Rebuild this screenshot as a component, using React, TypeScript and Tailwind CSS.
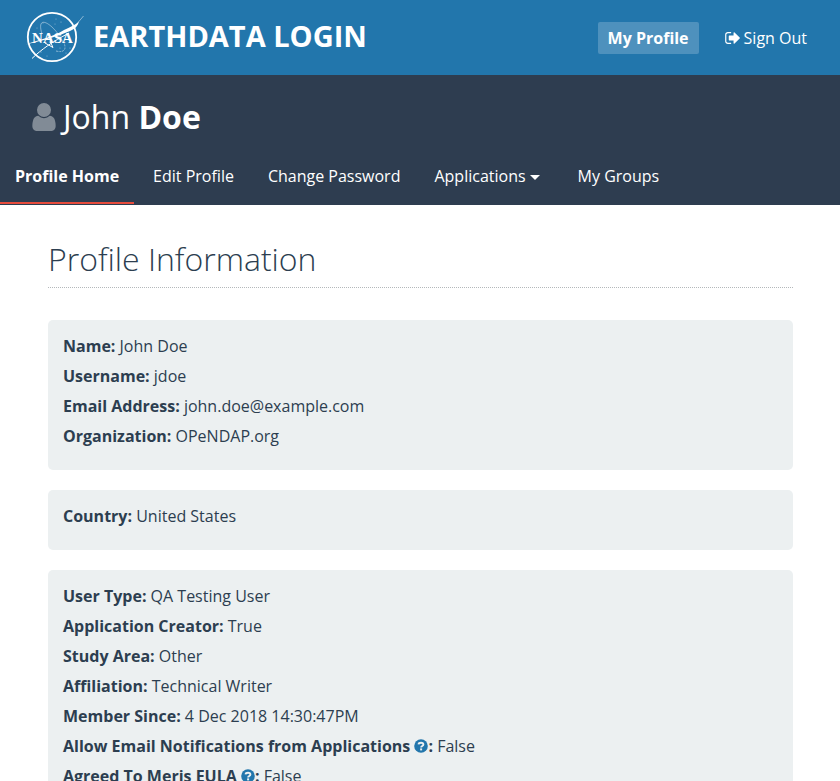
import type { ReactNode } from "react";

function NasaLogo() {
  return (
    <svg viewBox="0 0 60 56" className="h-14 w-15 shrink-0" role="img" aria-label="NASA" fill="none" stroke="white">
      <circle cx="27" cy="27" r="24.2" strokeWidth="1.8" />
      <path d="M17 24C13 11 18 9 27 17C32 22 37 28 38 33" strokeWidth="0.7" opacity="0.6" />
      <path d="M31 41 Q39 43 40 38 Q40 34 38 31" strokeWidth="0.8" strokeDasharray="2 1" opacity="0.6" />
      <path d="M1 34.500 C13 30 28 27 39 20 C45 17 50 15 54 11.500 C53 16 50 19 45 21 C34 26 17 31 1 34.500Z" fill="white" stroke="none" />
      <path d="M53 12.500 L58.500 6" strokeWidth="0.8" opacity="0.6" />
      <path d="M7 48.500 C17 39 27 32 44 23" strokeWidth="1" />
      <path d="M20 33 L28 37.500 L25 31" strokeWidth="1" />
      <g fill="white" stroke="none" opacity="0.5">
        <circle cx="18" cy="13" r="0.5" />
        <circle cx="31" cy="9" r="0.5" />
        <circle cx="36" cy="12" r="0.6" />
        <circle cx="12" cy="18" r="0.5" />
        <circle cx="30" cy="14" r="0.5" />
        <circle cx="16" cy="42" r="0.6" />
        <circle cx="22" cy="46" r="0.5" />
        <circle cx="41" cy="43" r="0.6" />
        <circle cx="45" cy="38" r="0.6" />
        <circle cx="35" cy="38" r="0.5" />
      </g>
      <text
        x="27.500"
        y="32.500"
        fill="white"
        stroke="none"
        textAnchor="middle"
        fontSize="15"
        className="font-['Liberation_Serif',serif] font-bold"
      >
        NASA
      </text>
    </svg>
  );
}

function UserIcon() {
  return (
    <svg viewBox="256 128 1280 1536" className="h-7 w-6 shrink-0 text-[#818b96]" fill="currentColor" aria-hidden="true">
      <path d="M1536 1399q0 109-62.5 187t-150.5 78h-854q-88 0-150.5-78t-62.5-187q0-85 8.5-160.5t31.5-152 58.5-131 94-89 134.5-34.5q131 128 313 128t313-128q76 0 134.5 34.5t94 89 58.5 131 31.5 152 8.5 160.5zm-256-887q0 159-112.5 271.5t-271.5 112.5-271.5-112.5-112.5-271.5 112.5-271.5 271.5-112.5 271.5 112.5 112.5 271.5z" />
    </svg>
  );
}

function SignOutIcon() {
  return (
    <svg viewBox="64 256 1568 1280" className="h-3 w-[15px] shrink-0" fill="currentColor" aria-hidden="true">
      <path d="M704 1440q0 4 1 20t.5 26.500-3 23.500-10 19.500-20.500 6.500h-320q-119 0-203.500-84.500t-84.500-203.500v-704q0-119 84.500-203.500t203.500-84.500h320q13 0 22.500 9.500t9.500 22.500q0 4 1 20t.5 26.500-3 23.500-10 19.500-20.500 6.500h-320q-66 0-113 47t-47 113v704q0 66 47 113t113 47h312l11.500 1 11.500 3 8 5.500 7 9 2 13.500zm928-544q0 26-19 45l-544 544q-19 19-45 19t-45-19-19-45v-288h-448q-26 0-45-19t-19-45v-384q0-26 19-45t45-19h448v-288q0-26 19-45t45-19 45 19l544 544q19 19 19 45z" />
    </svg>
  );
}

function HelpIcon() {
  return (
    <svg viewBox="0 0 14 14" className="inline-block size-[14px] align-[-1px]" aria-hidden="true">
      <circle cx="7" cy="7" r="6.800" fill="#2276ac" />
      <path d="M4.500 5.400C4.800 3.200 9.400 3.100 9.400 5.500C9.400 7 7.100 6.900 7.100 8.500" fill="none" stroke="#ecf0f1" strokeWidth="1.900" />
      <rect x="6.100" y="9.400" width="2" height="2" fill="#ecf0f1" />
    </svg>
  );
}

function Card({ children }: { children: ReactNode }) {
  return <dl className="mb-5 rounded-[5px] bg-[#ecf0f1] px-[15px] pt-[11px] pb-[19px]">{children}</dl>;
}

function Field({ label, value, help = false }: { label: string; value: string; help?: boolean }) {
  return (
    <div className="leading-[30px]">
      <dt className="inline font-bold">
        {label}
        {help && (
          <>
            {" "}
            <button type="button" aria-label={"About " + label}>
              <HelpIcon />
            </button>
          </>
        )}
        :
      </dt>{" "}
      <dd className="inline font-normal">{value}</dd>
    </div>
  );
}

export default function App() {
  return (
    <div className="min-h-screen bg-white font-['Open_Sans',sans-serif] text-base text-[#2c3e50]">
      <header className="flex h-[75px] items-center bg-[#2276ac] pr-[22px] pl-[25px] text-white">
        <a href="#" className="flex items-center gap-2">
          <NasaLogo />
          <h1 className="pb-1 text-[29px] leading-9 font-bold">EARTHDATA LOGIN</h1>
        </a>
        <nav aria-label="Account" className="ml-auto flex items-center gap-[15px]">
          <a href="#" className="rounded-[2px] bg-[#4e91bd] px-[10px] leading-8 font-bold">
            My Profile
          </a>
          <a href="#" className="flex items-center gap-1 px-[11px] leading-8">
            <SignOutIcon />
            Sign Out
          </a>
        </nav>
      </header>

      <section className="bg-[#2e3d50] text-white">
        <h2 className="flex items-center gap-[7px] px-8 pt-5 text-[32px] leading-[44px]">
          <UserIcon />
          <span>
            John <strong className="font-bold">Doe</strong>
          </span>
        </h2>
        <nav aria-label="Profile" className="flex gap-1 pt-[11px] pb-px leading-[52px]">
          <a href="#" aria-current="page" className="border-b-2 border-[#e74c3c] px-[15px] font-bold">
            Profile Home
          </a>
          <a href="#" className="px-[15px]">Edit Profile</a>
          <a href="#" className="px-[15px]">Change Password</a>
          <a href="#" className="px-[15px]">
            Applications
            <svg viewBox="0 0 10 5" className="mx-1 inline-block h-[5px] w-[10px]" fill="currentColor" aria-hidden="true">
              <path d="M0 0H10L5 5Z" />
            </svg>
          </a>
          <a href="#" className="px-[15px]">My Groups</a>
        </nav>
      </section>

      <main className="pr-[47px] pl-12">
        <h2 className="mb-8 border-b border-dotted border-[#b4b8bb] pt-8 pb-[6px] text-[32px] leading-[44px] font-light">
          Profile Information
        </h2>
        <Card>
          <Field label="Name" value="John Doe" />
          <Field label="Username" value="jdoe" />
          <Field label="Email Address" value="john.doe@example.com" />
          <Field label="Organization" value="OPeNDAP.org" />
        </Card>
        <Card>
          <Field label="Country" value="United States" />
        </Card>
        <Card>
          <Field label="User Type" value="QA Testing User" />
          <Field label="Application Creator" value="True" />
          <Field label="Study Area" value="Other" />
          <Field label="Affiliation" value="Technical Writer" />
          <Field label="Member Since" value="4 Dec 2018 14:30:47PM" />
          <Field label="Allow Email Notifications from Applications" value="False" help />
          <Field label="Agreed To Meris EULA" value="False" help />
        </Card>
      </main>
    </div>
  );
}
